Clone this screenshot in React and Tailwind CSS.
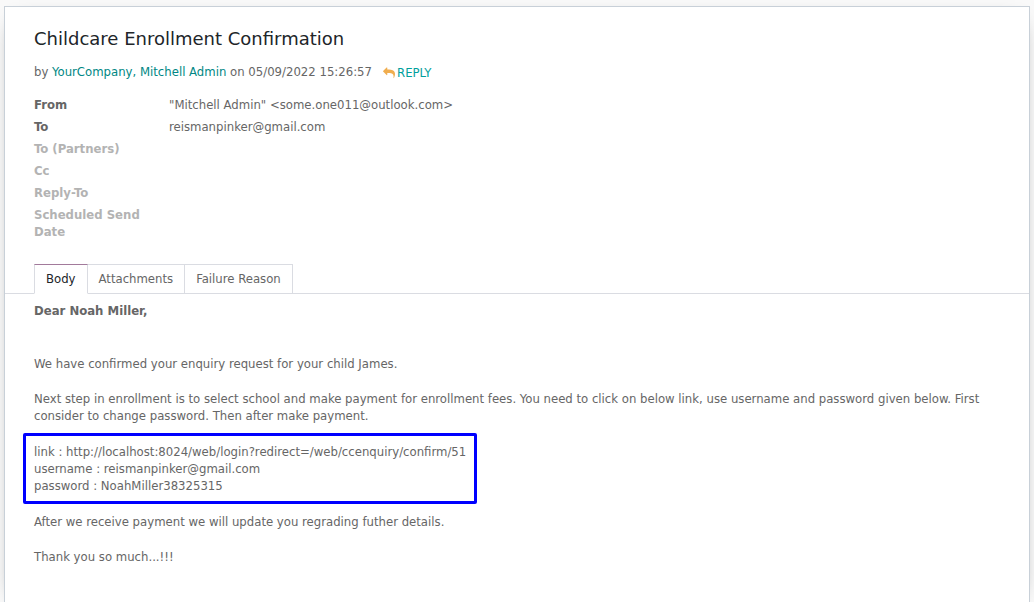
const details = [
  { label: 'From', value: '"Mitchell Admin" <some.one011@outlook.com>' },
  { label: 'To', value: 'reismanpinker@gmail.com' },
  { label: 'To (Partners)', value: '' },
  { label: 'Cc', value: '' },
  { label: 'Reply-To', value: '' },
  { label: 'Scheduled Send Date', value: '' },
];

function ReplyIcon() {
  return (
    <svg className="h-3 w-3 fill-[#f0ad4e]" viewBox="0 0 1792 1792" aria-hidden="true">
      <path d="M1792 1120q0 166-127 451-3 7-10.500 24t-13.500 30-13 22q-12 17-28 17-15 0-23.500-10t-8.500-25q0-9 2.500-26.500t2.500-23.500q5-68 5-123 0-101-17.500-181t-48.500-138.500-80-101-105.500-69.500-133-42.500-154-21.500-175.500-6h-224v256q0 26-19 45t-45 19-45-19l-512-512q-19-19-19-45t19-45l512-512q19-19 45-19t45 19 19 45v256h224q713 0 875 403 53 134 53 333z" />
    </svg>
  );
}

export default function App() {
  return (
    <div className="flex min-h-screen flex-col bg-[#f9f9f9] px-1 pt-1.5 font-['DejaVu_Sans_Condensed','DejaVu_Sans',sans-serif] text-[13px] leading-[17px] text-[#666666]">
      <main className="grow border border-b-0 border-[#c8d0d8] bg-white pb-6 shadow-[0_5px_20px_-15px_#000000]">
        <header className="px-[29px] pt-5">
          <h1 className="font-['DejaVu_Sans',sans-serif] text-[18px] leading-6 text-[#212529]">Childcare Enrollment Confirmation</h1>
          <div className="mt-3 flex items-start">
            <p>
              by <a href="#author" className="text-[#008784]">YourCompany, Mitchell Admin</a> on 05/09/2022 15:26:57
            </p>
            <button type="button" className="ml-[11px] flex items-center gap-0.5 pt-px text-[#00a09d]">
              <ReplyIcon />
              REPLY
            </button>
          </div>
          <dl className="mt-[15px]">
            {details.map(({ label, value }) => (
              <div key={label} className="mb-[5px] flex">
                <dt className={value ? 'w-[135px] shrink-0 pr-4 font-bold' : 'w-[135px] shrink-0 pr-4 font-bold text-[#b3b3b3]'}>{label}</dt>
                <dd>{value}</dd>
              </div>
            ))}
          </dl>
        </header>
        <div role="tablist" className="mt-6 flex border-b border-[#dadce2] px-[29px]">
          <button type="button" role="tab" aria-selected="true" className="-mb-px h-[30px] border border-t-[#a27a9b] border-r-[#dadce2] border-b-white border-l-[#dadce2] px-[11px] pb-0.5 text-[#212529]">Body</button>
          <button type="button" role="tab" aria-selected="false" className="border-t border-r border-[#dadce2] px-[11px] pb-0.5">Attachments</button>
          <button type="button" role="tab" aria-selected="false" className="border-t border-r border-[#dadce2] px-[11px] pb-0.5">Failure Reason</button>
        </div>
        <article className="px-[29px] pt-2">
          <p className="font-bold">Dear Noah Miller,</p>
          <p className="mt-9">We have confirmed your enquiry request for your child James.</p>
          <p className="mt-[18px]">
            Next step in enrollment is to select school and make payment for enrollment fees. You need to click on below link, use username and password given below. First consider to change password. Then after make payment.
          </p>
          <div className="mt-[9px] -ml-[11px] w-fit rounded-xs border-3 border-[#0000ff] px-2 py-[7px]">
            <p>link : http://localhost:8024/web/login?redirect=/web/ccenquiry/confirm/51</p>
            <p>username : reismanpinker@gmail.com</p>
            <p>password : NoahMiller38325315</p>
          </div>
          <p className="mt-[9px]">After we receive payment we will update you regrading futher details.</p>
          <p className="mt-[18px]">Thank you so much...!!!</p>
        </article>
      </main>
    </div>
  );
}
